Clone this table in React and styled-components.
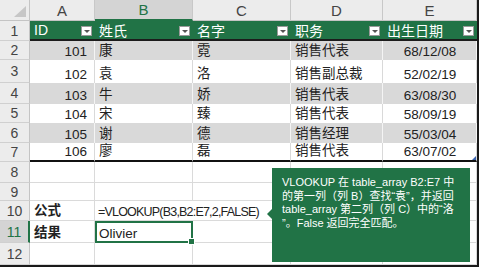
import React from 'react';
import styled, { createGlobalStyle, css } from 'styled-components';

const GREEN = '#217346';

const Global = createGlobalStyle`
  html, body { margin: 0; padding: 0; background: #fff; overflow: hidden; }
  #root { width: 480px; height: 267px; }
`;

const Frame = styled.div`
  position: relative;
  width: 479px;
  height: 267px;
  box-sizing: border-box;
  border-right: 2px solid #1a1a1a;
  border-bottom: 2px solid #1a1a1a;
`;

const Sheet = styled.div`
  display: grid;
  grid-template-columns: 30px 65px 98px 98px 92px 94px;
  grid-template-rows: 21px 20px 19px 23px 21px 19px 20px 19px 21px 18px 20px 22px 22px;
  font-family: 'Liberation Sans', 'Noto Sans CJK SC', sans-serif;
  font-size: 13.5px;
  color: #222;
`;

const Corner = styled.div`
  position: relative;
  background: #ececec;
  border-right: 1px solid #c4c4c4;
  border-bottom: 1px solid #c4c4c4;
  box-sizing: border-box;
  &::after {
    content: '';
    position: absolute;
    right: 3px;
    bottom: 3px;
    width: 0;
    height: 0;
    border-left: 12px solid transparent;
    border-bottom: 11px solid #c6c6c6;
  }
`;

const ColHeader = styled.div`
  display: flex;
  align-items: center;
  justify-content: center;
  box-sizing: border-box;
  font-size: 15px;
  background: ${p => (p.$selected ? '#d4d4d4' : '#ececec')};
  color: ${p => (p.$selected ? GREEN : '#444')};
  border-right: 1px solid #c8c8c8;
  border-bottom: ${p => (p.$selected ? `2px solid ${GREEN}` : '1px solid #c4c4c4')};
`;

const RowHeader = styled.div`
  display: flex;
  align-items: center;
  justify-content: center;
  box-sizing: border-box;
  font-size: 14px;
  background: ${p => (p.$selected ? '#d4d4d4' : '#ececec')};
  color: ${p => (p.$selected ? GREEN : '#444')};
  border-right: ${p => (p.$selected ? `2px solid ${GREEN}` : '1px solid #c4c4c4')};
  border-bottom: 1px solid #d0d0d0;
`;

const bands = {
  head: css`
    background: ${GREEN};
    color: #fff;
    border-bottom: 2px solid #1c1c1c;
    font-size: 14px;
    align-items: center;
  `,
  gray: css`
    background: #d9d9d9;
    border-right: 1px solid #f4f4f4;
  `,
  white: css`
    background: #fff;
    border-right: 1px solid #d9d9d9;
  `,
  plain: css`
    background: #fff;
    border-right: 1px solid #dadada;
    border-bottom: 1px solid #dadada;
  `,
};

const Cell = styled.div`
  position: relative;
  display: flex;
  align-items: flex-end;
  box-sizing: border-box;
  padding: 0 3px 1px 4px;
  white-space: nowrap;
  min-width: 0;
  justify-content: ${p => (p.$align === 'right' ? 'flex-end' : p.$align === 'center' ? 'center' : 'flex-start')};
  ${p => p.$align === 'right' && css`padding-right: 7px;`}
  ${p => bands[p.$band || 'plain']}
  ${p => p.$bold && css`font-weight: 700;`}
  ${p => p.$span && css`grid-column: span ${p.$span};`}
  ${p => p.$last && css`border-bottom: 2px solid #111;`}
  ${p => p.$selected && css`outline: 2px solid ${GREEN}; outline-offset: -2px; z-index: 1;`}
  ${p => p.$formula && css`font-size: 12.5px; letter-spacing: -0.8px; padding-left: 3px;`}
`;

const FilterButton = styled.span`
  position: absolute;
  right: 3px;
  top: 5px;
  width: 11px;
  height: 10px;
  background: #fff;
  border: 1px solid #9a9a9a;
  box-sizing: border-box;
  &::after {
    content: '';
    position: absolute;
    left: 2px;
    top: 3px;
    border-left: 3px solid transparent;
    border-right: 3px solid transparent;
    border-top: 3px solid #555;
  }
`;

const FillHandle = styled.span`
  position: absolute;
  right: -3px;
  bottom: -3px;
  width: 5px;
  height: 5px;
  background: ${GREEN};
  border: 1px solid #fff;
`;

const ResizeMark = styled.span`
  position: absolute;
  right: 0;
  bottom: 0;
  border-left: 4px solid transparent;
  border-bottom: 4px solid #3a64b0;
`;

const Callout = styled.div`
  position: absolute;
  left: 272px;
  top: 168px;
  width: 198px;
  height: 94px;
  box-sizing: border-box;
  padding: 8px 4px 0 10px;
  background: ${GREEN};
  color: #fff;
  font-family: 'Liberation Sans', 'Noto Sans CJK SC', sans-serif;
  font-size: 11px;
  line-height: 13.5px;
  font-weight: 400;
  z-index: 3;
  &::before {
    content: '';
    position: absolute;
    left: -5px;
    top: 41px;
    border-top: 5px solid transparent;
    border-bottom: 5px solid transparent;
    border-right: 5px solid ${GREEN};
  }
`;

const Line = styled.div`
  white-space: nowrap;
`;

const headers = ['ID', '姓氏', '名字', '职务', '出生日期'];
const data = [
  [101, '康', '霓', '销售代表', '68/12/08'],
  [102, '袁', '洛', '销售副总裁', '52/02/19'],
  [103, '牛', '娇', '销售代表', '63/08/30'],
  [104, '宋', '臻', '销售代表', '58/09/19'],
  [105, '谢', '德', '销售经理', '55/03/04'],
  [106, '廖', '磊', '销售代表', '63/07/02'],
];
const aligns = ['right', 'left', 'left', 'left', 'center'];

export default function App() {
  return (
    <>
      <Global />
      <Frame>
        <Sheet>
          <Corner />
          {['A', 'B', 'C', 'D', 'E'].map(c => (
            <ColHeader key={c} $selected={c === 'B'}>{c}</ColHeader>
          ))}

          <RowHeader>1</RowHeader>
          {headers.map(h => (
            <Cell key={h} $band="head">
              {h}
              <FilterButton />
            </Cell>
          ))}

          {data.map((row, i) => (
            <React.Fragment key={row[0]}>
              <RowHeader>{i + 2}</RowHeader>
              {row.map((v, j) => (
                <Cell
                  key={j}
                  $band={i % 2 === 0 ? 'gray' : 'white'}
                  $align={aligns[j]}
                  $last={i === data.length - 1}
                >
                  {v}
                  {i === data.length - 1 && j === 4 && <ResizeMark />}
                </Cell>
              ))}
            </React.Fragment>
          ))}

          {[8, 9].map(r => (
            <React.Fragment key={r}>
              <RowHeader>{r}</RowHeader>
              {[0, 1, 2, 3, 4].map(j => <Cell key={j} />)}
            </React.Fragment>
          ))}

          <RowHeader>10</RowHeader>
          <Cell $bold>公式</Cell>
          <Cell $span={2} $formula>=VLOOKUP(B3,B2:E7,2,FALSE)</Cell>
          <Cell />
          <Cell />

          <RowHeader $selected>11</RowHeader>
          <Cell $bold>结果</Cell>
          <Cell $selected>
            Olivier
            <FillHandle />
          </Cell>
          <Cell />
          <Cell />
          <Cell />

          <RowHeader>12</RowHeader>
          {[0, 1, 2, 3, 4].map(j => <Cell key={j} />)}
        </Sheet>

        <Callout>
          <Line>VLOOKUP 在 table_array B2:E7 中</Line>
          <Line>的第一列（列 B）查找“袁”，并返回</Line>
          <Line>table_array 第二列（列 C）中的“洛</Line>
          <Line>”。False 返回完全匹配。</Line>
        </Callout>
      </Frame>
    </>
  );
}
